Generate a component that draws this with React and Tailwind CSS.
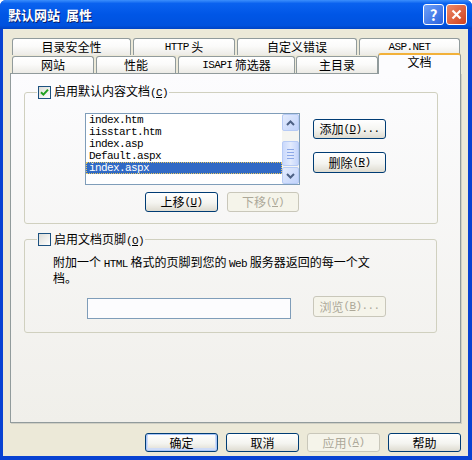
import React from 'react';

const mono = "font-['Liberation_Mono',monospace] text-[11px] tracking-[-0.6px]";

function Btn({ children, className = '', disabled, def }) {
  const look = disabled
    ? 'border-[#c9c7ba] bg-[#f5f4ea] text-[#aca899]'
    : 'border-[#003c74] bg-[linear-gradient(to_bottom,#ffffff,#f4f4f0_55%,#dedbd0)] text-black';
  const focus = def ? 'shadow-[inset_0_0_0_1px_#a9c6f8,inset_0_-1px_0_2px_#cfdcf7]' : '';
  return (
    <div className={`flex items-center justify-center rounded-[3px] border text-[12px] leading-none ${look} ${focus} ${className}`}>
      {children}
    </div>
  );
}

function Check({ checked }) {
  return (
    <span className="flex h-[13px] w-[13px] shrink-0 items-center justify-center border border-[#1c5180] bg-[linear-gradient(135deg,#dcdcd7,#ffffff)]">
      {checked && (
        <svg width="9" height="9" viewBox="0 0 9 9">
          <path d="M1 4.2 L3.4 6.6 L8 1.6" stroke="#21a121" strokeWidth="2" fill="none" />
        </svg>
      )}
    </span>
  );
}

function Tab({ children, className = '' }) {
  return (
    <div className={`flex h-[17px] items-center justify-center rounded-t-[3px] border border-b-0 border-[#919b9c] bg-[linear-gradient(to_bottom,#ffffff,#fbfbfa_45%,#ecebe6)] text-[12px] leading-none ${className}`}>
      {children}
    </div>
  );
}

function Arrow({ up }) {
  return (
    <div className="flex h-[17px] w-[17px] items-center justify-center rounded-[2px] border border-[#b7cbf5] bg-[linear-gradient(135deg,#e3ebfd,#c1d3fb)]">
      <svg width="9" height="6" viewBox="0 0 9 6">
        <path d={up ? 'M1 5 L4.5 1.5 L8 5' : 'M1 1 L4.5 4.5 L8 1'} stroke="#4d6185" strokeWidth="2" fill="none" />
      </svg>
    </div>
  );
}

const files = ['index.htm', 'iisstart.htm', 'index.asp', 'Default.aspx', 'index.aspx'];

export default function App() {
  return (
    <div className="flex h-[460px] w-[472px] flex-col overflow-hidden rounded-t-[6px] bg-[#0842d2] font-['Noto_Sans_CJK_SC',sans-serif] text-black">
      {/* title bar */}
      <div className="flex h-[29px] shrink-0 items-center bg-[linear-gradient(to_bottom,#3c8ffc_0%,#0a62ef_12%,#0056e6_50%,#0052de_88%,#0043c4_100%)] pl-[8px] pr-[5px]">
        <span className="text-[13px] font-bold text-white [text-shadow:1px_1px_0_#0a1f6b]">默认网站&nbsp;&nbsp;属性</span>
        <div className="ml-auto flex gap-[2px]">
          <div className="flex h-[21px] w-[21px] items-center justify-center rounded-[3px] border border-white bg-[linear-gradient(135deg,#6ea0f8,#2a62de)] text-[15px] font-bold leading-none text-white">?</div>
          <div className="flex h-[21px] w-[21px] items-center justify-center rounded-[3px] border border-white bg-[linear-gradient(135deg,#ec8a6a,#d0401c)]">
            <svg width="11" height="11" viewBox="0 0 11 11">
              <path d="M1.5 1.5 L9.5 9.5 M9.5 1.5 L1.5 9.5" stroke="#fff" strokeWidth="2.2" />
            </svg>
          </div>
        </div>
      </div>

      {/* body */}
      <div className="mb-[4px] ml-[3px] mr-[4px] flex flex-1 flex-col bg-[#ece9d8] px-[7px] pt-[9px]">
        {/* tab row 1 */}
        <div className="flex">
          <Tab className="ml-[2px] w-[119px]">目录安全性</Tab>
          <Tab className="ml-[2px] w-[102px]"><span className={mono}>HTTP</span>&nbsp;头</Tab>
          <Tab className="ml-[2px] w-[120px]">自定义错误</Tab>
          <Tab className="ml-[2px] w-[101px]"><span className={mono}>ASP.NET</span></Tab>
        </div>
        {/* tab row 2 */}
        <div className="relative z-10 -mb-[1px] flex h-[19px] items-end">
          <Tab className="mb-[1px] ml-[2px] w-[82px]">网站</Tab>
          <Tab className="mb-[1px] ml-[2px] w-[80px]">性能</Tab>
          <Tab className="mb-[1px] ml-[2px] w-[117px]"><span className={mono}>ISAPI</span>&nbsp;筛选器</Tab>
          <Tab className="mb-[1px] ml-[1px] w-[82px]">主目录</Tab>
          <div className="flex h-[21px] w-[83px] items-start justify-center rounded-t-[3px] border-x border-t-[2px] border-[#919b9c] border-t-[#f2b13a] bg-[#fcfcfe] pt-[1px] text-[12px] leading-none">
            文档
          </div>
        </div>

        {/* panel */}
        <div className="flex h-[350px] flex-col border border-[#919b9c] bg-[linear-gradient(to_bottom,#fcfcfe,#f0efea)] px-[13px] pt-[11px] shadow-[1px_1px_0_#d0cfc4]">
          {/* group 1 */}
          <fieldset className="h-[139px] w-[414px] rounded-[3px] border border-[#d0d0bf]">
            <legend className="ml-[12px] flex h-[14px] items-center gap-[3px] px-[1px] text-[12px] leading-none">
              <Check checked />
              <span>启用默认内容文档<span className={mono}>(<u>C</u>)</span></span>
            </legend>
            <div className="flex">
              <div className="ml-[60px] mt-[14px] flex h-[72px] w-[215px] border border-[#7f9db9] bg-white">
                <div className="flex-1">
                  {files.map((f, i) =>
                    i === 4 ? (
                      <div key={f} className={`h-[12px] border border-dotted border-[#e8c860] bg-[#316ac5] pl-[2px] leading-[10px] text-white ${mono}`}>
                        {f}
                      </div>
                    ) : (
                      <div key={f} className={`h-[12px] pl-[3px] leading-[12px] ${mono}`}>
                        {f}
                      </div>
                    )
                  )}
                </div>
                <div className="flex w-[17px] flex-col bg-[#f5f5f1]">
                  <Arrow up />
                  <div className="flex-1">
                    <div className="mt-[10px] flex h-[25px] flex-col items-center justify-center gap-[2px] rounded-[2px] border border-[#b7cbf5] bg-[linear-gradient(to_right,#cad9fc,#e3ebfd,#c6d6fb)]">
                      <span className="h-px w-[7px] bg-[#8ca8e8]" />
                      <span className="h-px w-[7px] bg-[#8ca8e8]" />
                      <span className="h-px w-[7px] bg-[#8ca8e8]" />
                      <span className="h-px w-[7px] bg-[#8ca8e8]" />
                    </div>
                  </div>
                  <Arrow />
                </div>
              </div>
              <div className="ml-[13px] mt-[20px] flex flex-col gap-[13px]">
                <Btn className="h-[20px] w-[73px]">添加<span className={mono}>(<u>D</u>)...</span></Btn>
                <Btn className="h-[21px] w-[73px]">删除<span className={mono}>(<u>R</u>)</span></Btn>
              </div>
            </div>
            <div className="mt-[7px] flex">
              <Btn className="ml-[120px] h-[20px] w-[73px]">上移<span className={mono}>(<u>U</u>)</span></Btn>
              <Btn disabled className="ml-[9px] h-[20px] w-[72px]">下移<span className={mono}>(<u>V</u>)</span></Btn>
            </div>
          </fieldset>

          {/* group 2 */}
          <fieldset className="mt-[9px] h-[100px] w-[413px] rounded-[3px] border border-[#d0d0bf]">
            <legend className="ml-[12px] flex h-[13px] items-center gap-[3px] px-[1px] text-[12px] leading-none">
              <Check />
              <span>启用文档页脚<span className={mono}>(<u>O</u>)</span></span>
            </legend>
            <p className="ml-[28px] mt-[9px] text-[12px] leading-[13px]">
              附加一个 <span className={mono}>HTML</span> 格式的页脚到您的 <span className={mono}>Web</span> 服务器返回的每一个文
              <br />
              档。
            </p>
            <div className="mt-[12px] flex items-start">
              <div className="ml-[62px] mt-[2px] h-[21px] w-[204px] border border-[#7f9db9] bg-[#fcfcfe]" />
              <Btn disabled className="ml-[22px] h-[21px] w-[73px]">浏览<span className={mono}>(<u>B</u>)...</span></Btn>
            </div>
          </fieldset>
        </div>

        {/* bottom buttons */}
        <div className="mt-[10px] flex justify-end gap-[8px]">
          <Btn def className="h-[19px] w-[73px]">确定</Btn>
          <Btn className="h-[19px] w-[73px]">取消</Btn>
          <Btn disabled className="h-[19px] w-[73px]">应用<span className={mono}>(<u>A</u>)</span></Btn>
          <Btn className="h-[19px] w-[73px]">帮助</Btn>
        </div>
      </div>
    </div>
  );
}
